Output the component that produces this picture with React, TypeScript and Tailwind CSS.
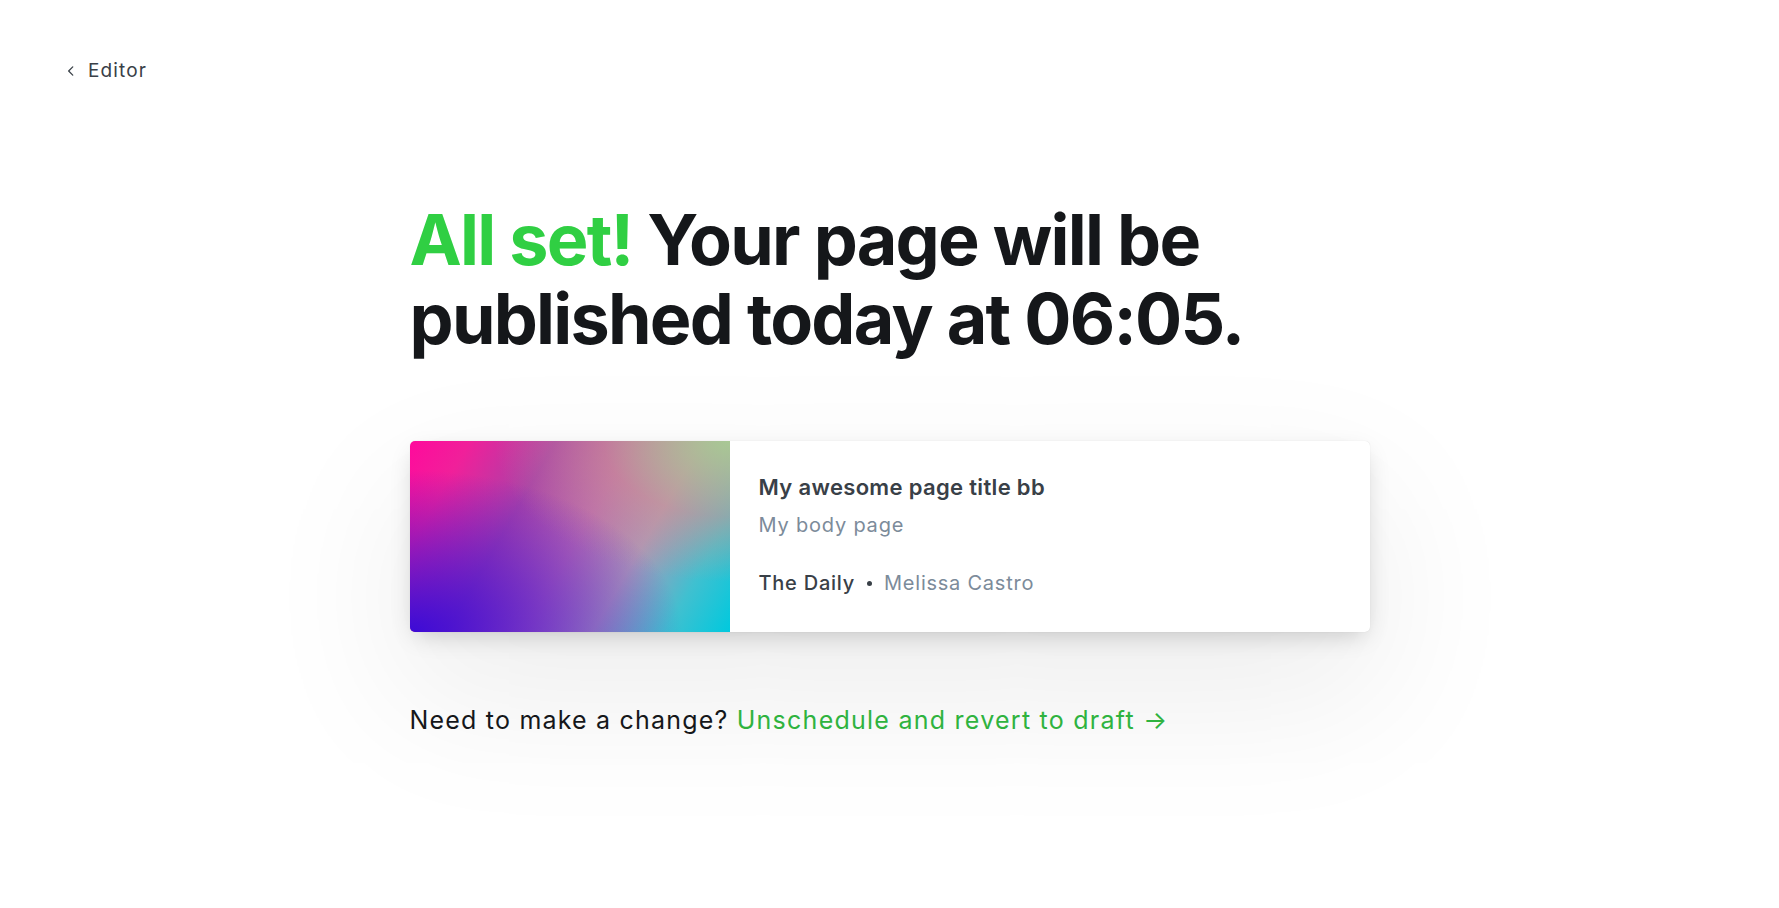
import React from "react";

export default function App() {
  return (
    <div className="min-h-[908px] w-full bg-white font-['Inter',sans-serif] text-[#15171a] overflow-hidden">
      <div className="flex h-[140px] items-start pl-[64px] pt-[59px]">
        <a className="flex items-center gap-[10px] text-[19px] leading-[24px] text-[#394047] tracking-[0.06em]">
          <svg width="14" height="14" viewBox="0 0 24 24" fill="none" stroke="#394047" strokeWidth="2.2" strokeLinecap="round" strokeLinejoin="round">
            <path d="M15 5 8 12l7 7" />
          </svg>
          <span>Editor</span>
        </a>
      </div>

      <div className="mx-auto flex w-[960px] flex-col">
        <h1 className="mt-[60px] text-[70px] font-bold leading-[79px] tracking-[-0.025em]">
          <span className="text-[#30cf43]">All set!</span> Your page will be
          <br />
          published today at 06:05.
        </h1>

        <div className="mt-[83px] flex h-[191px] overflow-hidden rounded-[5px] bg-white shadow-[0_0_1px_rgba(0,0,0,0.15),0_8px_24px_-6px_rgba(0,0,0,0.2),0_60px_150px_10px_rgba(0,0,0,0.07)]">
          <div className="w-[320px] shrink-0 [background-image:radial-gradient(ellipse_at_0%_100%,#3c0bd6_0%,rgba(70,15,212,0.55)_30%,transparent_60%),radial-gradient(ellipse_at_100%_0%,#a8c894_0%,rgba(210,150,140,0.5)_28%,transparent_52%),linear-gradient(120deg,#ff0a9c_0%,#f0209a_14%,#a842a8_34%,#b86ab0_52%,#ac96b8_68%,#40c0d0_85%,#00c9de_100%)]" />
          <div className="flex flex-col pl-[29px] pt-[31px]">
            <div className="text-[22px] font-semibold leading-[30px] text-[#394047] tracking-[0.015em]">My awesome page title bb</div>
            <div className="mt-[9px] text-[20px] leading-[28px] text-[#7c8b9a] tracking-[0.04em]">My body page</div>
            <div className="mt-[30px] flex items-center text-[20px] leading-[28px] tracking-[0.038em]">
              <span className="font-medium text-[#394047]">The Daily</span>
              <span className="mx-[12px] h-[5px] w-[5px] rounded-full bg-[#394047]" />
              <span className="text-[#7c8b9a]">Melissa Castro</span>
            </div>
          </div>
        </div>

        <p className="mt-[72px] text-[25px] font-normal leading-[32px] tracking-[0.048em] text-[#15171a]">
          Need to make a change?{" "}
          <a className="text-[#2fb33f] tracking-[0.05em]">Unschedule and revert to draft →</a>
        </p>
      </div>
    </div>
  );
}
